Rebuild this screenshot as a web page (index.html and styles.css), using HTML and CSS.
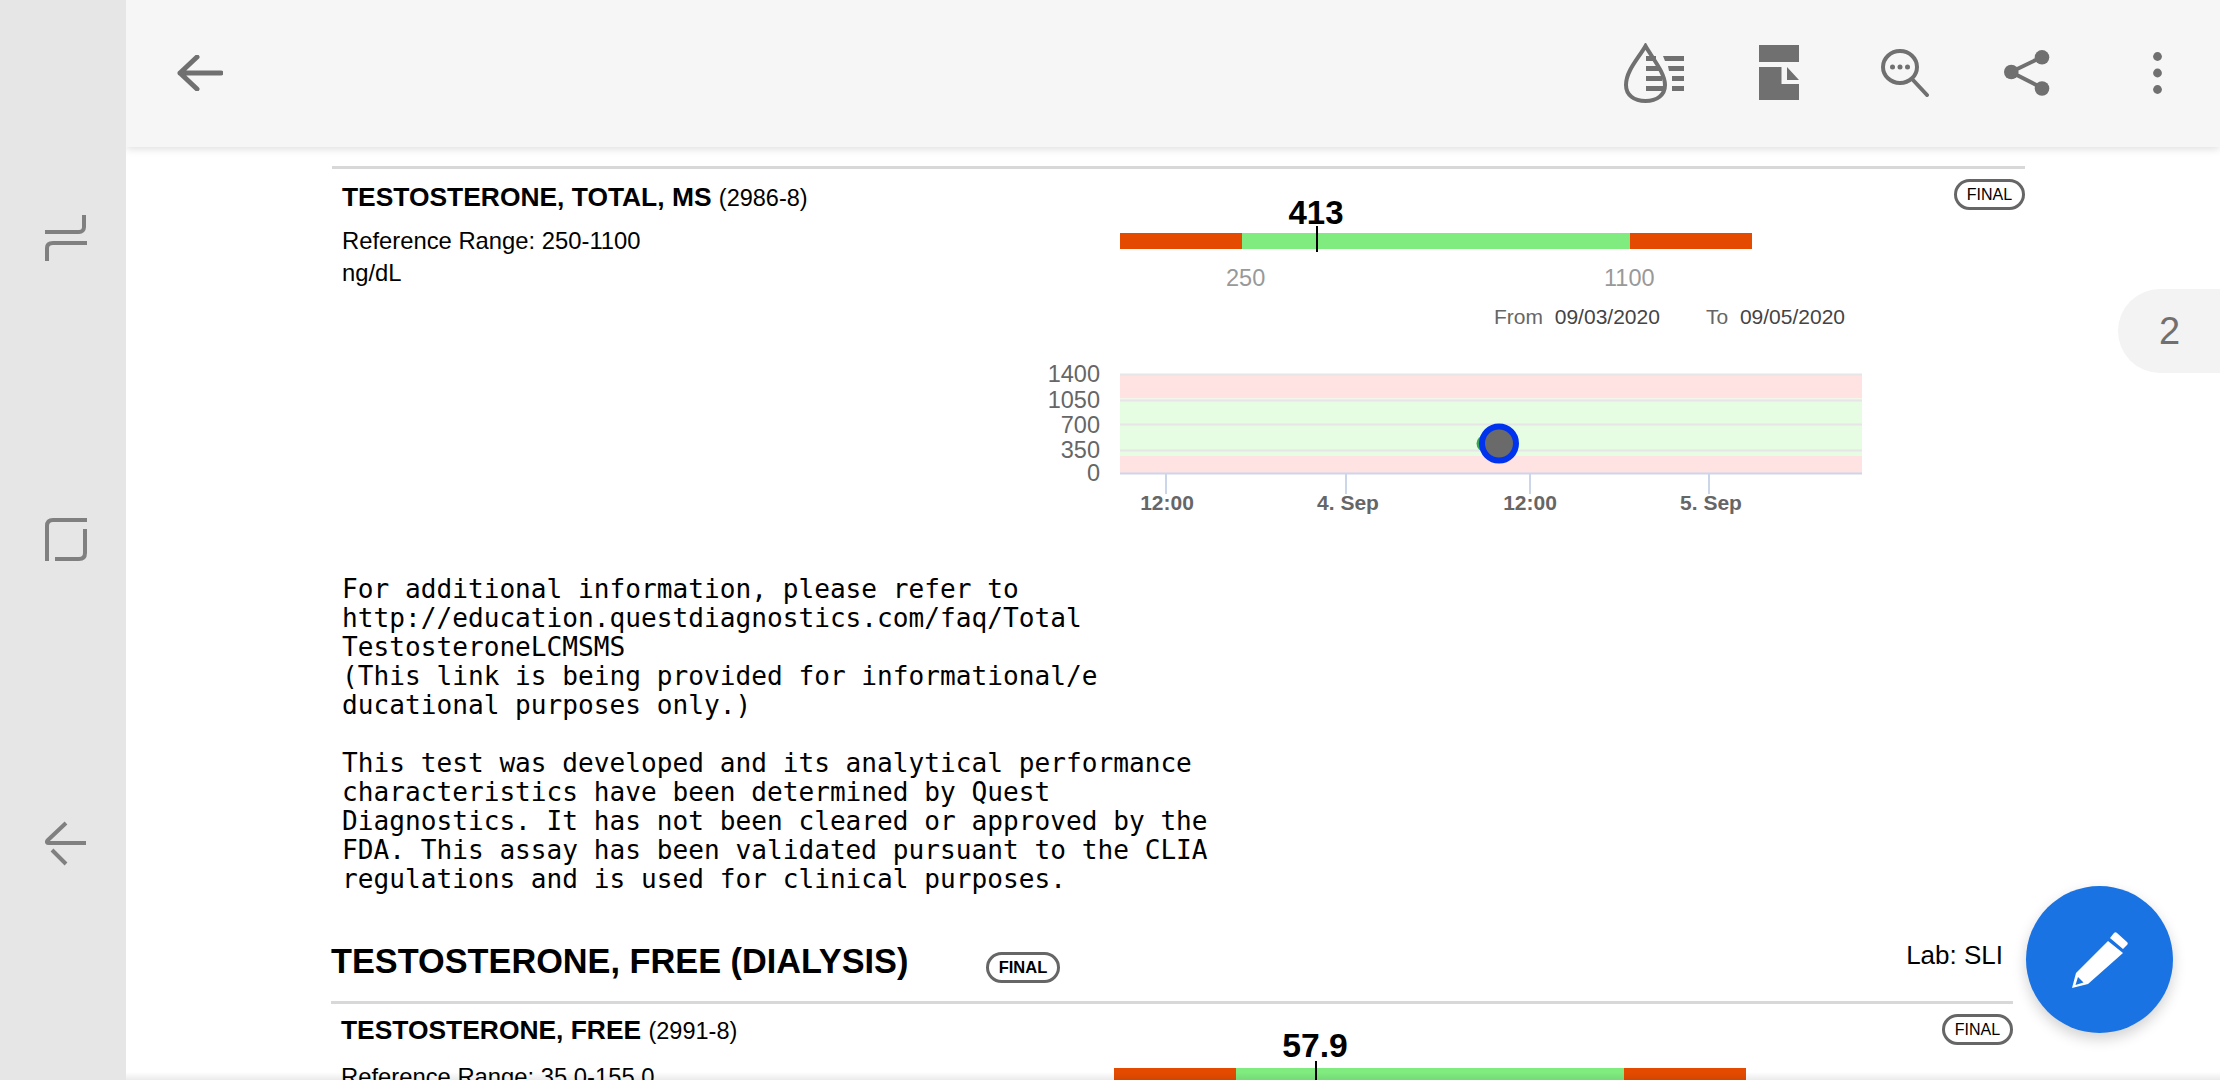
FILE: index.html
```html
<!DOCTYPE html>
<html lang="en">
<head>
<meta charset="utf-8">
<title>Lab results</title>
<link rel="stylesheet" href="styles.css">
</head>
<body>
<div class="app">
  <nav class="softkeys">
    <svg class="softkey" width="42" height="46" viewBox="0 0 42 46"><path d="M39 0V12c0 3-2 5-5 5H0M42 28H8c-4 0-6 2-6 5V46"/></svg>
    <svg class="softkey" width="42" height="46" viewBox="0 0 42 46"><path d="M2 43V8c0-4 2-6 6-6H42M40 11V35c0 4-2 6-6 6H10"/></svg>
    <svg class="softkey" width="42" height="46" viewBox="0 0 42 46"><path d="M21 2L3 19c-2 2-1 3 1 3H41M7 29L21 43"/></svg>
  </nav>
  <div class="main">
    <header class="toolbar">
      <svg class="back" width="46" height="36" viewBox="0 0 46 36"><path d="M44 18H3M20 2L3 18l17 16"/></svg>
      <div class="actions">
        <span class="action"><svg width="61" height="60" viewBox="0 0 61 60"><path class="ol" d="M22.5 3C15 16 3 28 3 42c0 10 8 16 19.500 16S42 52 42 42C42 30 30 16 22.500 3z"/><path class="fl" d="M23 13h10v5H23zM23 23h14v5H23zM23 33h16v5H23zM23 43h17v5H23zM40 13h21v5H42zM45 23h16v5H46zM49 33h12v5H49zM49 43h12v5H49z"/></svg></span>
        <span class="action"><svg width="40" height="55" viewBox="0 0 40 55"><path class="fl" d="M0 0h40v17H0zM0 22h22.500v17H40v16H0zM28 22l12 13H28z"/></svg></span>
        <span class="action"><svg width="48" height="48" viewBox="0 0 48 48"><ellipse class="ol" cx="19" cy="18" rx="17" ry="16"/><path class="ol" d="M32 31l14 15"/><circle class="fl" cx="11.500" cy="18" r="2.500"/><circle class="fl" cx="19" cy="18" r="2.500"/><circle class="fl" cx="26.500" cy="18" r="2.500"/></svg></span>
        <span class="action share"><svg width="46" height="46" viewBox="0 0 46 46"><path class="ol" d="M38 7L7 22l31 16"/><circle class="fl" cx="38" cy="7.300" r="7.300"/><circle class="fl" cx="7.300" cy="22" r="7.300"/><circle class="fl" cx="38" cy="38.500" r="7.300"/></svg></span>
        <span class="action"><svg width="9" height="42" viewBox="0 0 9 42"><circle class="fl" cx="4.500" cy="4.500" r="4.400"/><circle class="fl" cx="4.500" cy="21" r="4.400"/><circle class="fl" cx="4.500" cy="37.500" r="4.400"/></svg></span>
      </div>
    </header>
    <main class="content">
      <section class="result first">
        <div class="result-head">
          <h3 class="result-name">TESTOSTERONE, TOTAL, MS <span class="code">(2986-8)</span></h3>
          <span class="pill">FINAL</span>
        </div>
        <div class="result-body">
          <div class="info">
            <p>Reference Range: 250-1100</p>
            <p>ng/dL</p>
          </div>
          <div class="graphs">
            <div class="range">
              <div class="range-value">413</div>
              <div class="range-bar">
                <i class="seg low"></i><i class="seg ok"></i><i class="seg high"></i>
                <i class="marker"></i>
              </div>
              <div class="range-labels"><span>250</span><span>1100</span></div>
            </div>
            <div class="dates">
              <span>From <b>09/03/2020</b></span>
              <span>To <b>09/05/2020</b></span>
            </div>
            <svg class="trend" width="780" height="150" viewBox="0 0 780 150">
              <rect class="band-red" x="58" y="4" width="742" height="23.500"/>
              <rect class="band-green" x="58" y="27.500" width="742" height="57"/>
              <rect class="band-red" x="58" y="84.500" width="742" height="17.500"/>
              <path class="grid" d="M58 3.500h742M58 29.500h742M58 53.500h742M58 79.500h742"/>
              <path class="axis" d="M58 102.500h742M104 103v20M284 103v20M468 103v20M647 103v20"/>
              <text class="ylab" x="38" y="11">1400</text>
              <text class="ylab" x="38" y="37">1050</text>
              <text class="ylab" x="38" y="62">700</text>
              <text class="ylab" x="38" y="87">350</text>
              <text class="ylab" x="38" y="110">0</text>
              <text class="xlab" x="105" y="139">12:00</text>
              <text class="xlab" x="286" y="139">4. Sep</text>
              <text class="xlab" x="468" y="139">12:00</text>
              <text class="xlab" x="649" y="139">5. Sep</text>
              <circle class="dot-prev" cx="422.500" cy="72.500" r="8"/>
              <circle class="dot" cx="437" cy="72.500" r="17"/>
            </svg>
          </div>
        </div>
        <pre class="note">For additional information, please refer to
http://education.questdiagnostics.com/faq/Total
TestosteroneLCMSMS
(This link is being provided for informational/e
ducational purposes only.)

This test was developed and its analytical performance
characteristics have been determined by Quest
Diagnostics. It has not been cleared or approved by the
FDA. This assay has been validated pursuant to the CLIA
regulations and is used for clinical purposes.</pre>
      </section>
      <section class="panel">
        <div class="panel-head">
          <h2 class="panel-title">TESTOSTERONE, FREE (DIALYSIS)</h2>
          <span class="pill bold">FINAL</span>
          <span class="lab">Lab: SLI</span>
        </div>
        <div class="result second">
          <div class="result-head">
            <h3 class="result-name">TESTOSTERONE, FREE <span class="code">(2991-8)</span></h3>
            <span class="pill">FINAL</span>
          </div>
          <div class="result-body">
            <div class="info"><p>Reference Range: 35.0-155.0</p></div>
            <div class="graphs">
              <div class="range">
                <div class="range-value">57.9</div>
                <div class="range-bar">
                  <i class="seg low"></i><i class="seg ok"></i><i class="seg high"></i>
                  <i class="marker"></i>
                </div>
              </div>
            </div>
          </div>
        </div>
      </section>
    </main>
    <div class="page-badge">2</div>
    <button class="fab" aria-label="Edit">
      <svg width="56" height="56" viewBox="0 0 56 56"><path class="pen" d="M42 1c1-1 2-1 3 0l10 9c1 1 1 2 0 3l-4 4-13-11zM36 9l15 12-35 31-12-11zM4 41l12 11-16 4z"/><path class="pen-core" d="M6 45l-2.500 8 8-2.500z"/></svg>
    </button>
    <div class="bottom-fade"></div>
  </div>
</div>
</body>
</html>
```

FILE: styles.css
```css
* { box-sizing: border-box; }
html, body { margin: 0; height: 100%; overflow: hidden; }
body { font-family: "Liberation Sans", Arial, sans-serif; color: #000; background: #fff; }
h2, h3, p, pre { margin: 0; }

.app { display: flex; width: 2220px; height: 1080px; }

.softkeys { width: 126px; flex: none; background: #e6e6e6; display: flex; flex-direction: column; align-items: center; padding-top: 215px; gap: 257px; }
.softkey { margin-left: 5px; fill: none; stroke: #808080; stroke-width: 4; }

.main { position: relative; flex: 1; display: flex; flex-direction: column; min-width: 0; overflow: hidden; }

.toolbar { height: 147px; flex: none; background: #f6f6f6; display: flex; align-items: center; justify-content: space-between; padding: 0 0 2px 51px; box-shadow: 0 2px 8px rgba(0,0,0,.13); position: relative; z-index: 2; }
.back { fill: none; stroke: #707070; stroke-width: 5; stroke-linecap: round; stroke-linejoin: round; }
.actions { display: flex; align-items: center; }
.action { width: 126px; display: flex; align-items: center; justify-content: center; }
.action.share { padding-right: 8px; }
.actions .ol { fill: none; stroke: #707070; stroke-width: 4; stroke-linecap: round; }
.actions .fl { fill: #707070; }

.content { flex: 1; min-height: 0; overflow: hidden; padding: 19px 0 0 206px; }

.first { width: 1693px; border-top: 3px solid #d8d8d8; padding: 0 0 0 10px; }
.result-head { display: flex; justify-content: space-between; align-items: flex-start; }
.first .result-head { padding-top: 12px; }
.first .pill { margin-top: -2px; }
.result-name { font-size: 26.4px; line-height: 32px; font-weight: 700; }
.code { font-weight: 400; font-size: 23.5px; }
.pill { display: inline-flex; align-items: center; justify-content: center; width: 71px; height: 31px; border: 3px solid #666; border-radius: 16px; font-size: 16px; color: #000; background: #fff; }
.pill.bold { font-weight: 700; font-size: 16.5px; width: 74px; }

.result-body { display: flex; }
.info { width: 768px; flex: none; font-size: 23.8px; line-height: 32px; padding-top: 11px; }
.info p { white-space: nowrap; }
.graphs { flex: 1; min-width: 0; margin-top: -17px; }
.range { width: 632px; margin-left: 10px; }
.range-value { font-size: 33px; font-weight: 700; line-height: 32px; text-align: center; width: 392px; }
.range-bar { position: relative; display: flex; height: 16px; margin-top: 4px; }
.seg { display: block; height: 100%; }
.seg.low { width: 122px; background: #e54b00; }
.seg.ok { width: 388px; background: #80ec80; }
.seg.high { width: 122px; background: #e54b00; }
.marker { position: absolute; left: 196px; top: -7px; width: 2px; height: 26px; background: #000; }
.range-labels { display: flex; font-size: 23.5px; color: #999; margin-top: 15.5px; line-height: 26px; }
.range-labels span:first-child { margin-left: 106px; width: 378px; }
.dates { display: flex; justify-content: flex-end; gap: 46px; width: 735px; font-size: 21px; line-height: 24px; color: #666; margin-top: 14.5px; }
.dates b { font-weight: 400; color: #444; margin-left: 6px; }
.trend { display: block; margin-top: 41.5px; margin-left: -48px; overflow: visible; }
.band-red { fill: #ffe3e3; }
.band-green { fill: #e6fde4; }
.grid { stroke: #e6e6e6; stroke-width: 2; fill: none; }
.axis { stroke: #ccd6eb; stroke-width: 2; fill: none; }
.ylab { font-family: "Liberation Sans", Arial, sans-serif; font-size: 23.5px; fill: #666; text-anchor: end; }
.xlab { font-family: "Liberation Sans", Arial, sans-serif; font-size: 21px; font-weight: 700; fill: #666; text-anchor: middle; }
.dot-prev { fill: #3aa655; }
.dot { fill: #6a6a6a; stroke: #0033ee; stroke-width: 6; }

.note { font-family: "DejaVu Sans Mono", "Liberation Mono", monospace; font-size: 26.15px; line-height: 29px; color: #000; margin-top: 54.5px; white-space: pre; }

.panel { width: 1682px; margin-top: 26px; margin-left: -1px; }
.panel-head { display: flex; align-items: center; height: 84px; border-bottom: 3px solid #d8d8d8; }
.panel-title { font-size: 34.3px; font-weight: 700; line-height: 40px; width: 655px; flex: none; }
.lab { margin-left: auto; font-size: 26px; margin-right: 10px; margin-bottom: 11px; }
.panel-head .pill { margin-top: 14px; }
.second { padding-left: 10px; }
.second .result-head { padding-top: 10px; }
.second .info { padding-top: 14px; }
.second .graphs { margin-top: -18px; }
.second .range { margin-left: 5px; }
.second .range-value { width: 402px; font-size: 33.7px; }
.second .range-bar { margin-top: 7px; }
.second .marker { left: 201px; }

.page-badge { position: absolute; right: 0; top: 289px; width: 102px; height: 84px; background: #f3f3f3; border-radius: 42px 0 0 42px; color: #707070; font-size: 38px; display: flex; align-items: center; padding-left: 41px; z-index: 3; }
.fab { position: absolute; left: 1900px; top: 886px; width: 147px; height: 147px; border: 0; border-radius: 50%; background: #1a73e2; box-shadow: 0 6px 14px rgba(0,0,0,.18); display: flex; align-items: center; justify-content: center; padding: 0; z-index: 4; }
.pen { fill: #fff; }
.pen-core { fill: #1a73e2; }
.bottom-fade { position: absolute; left: 0; right: 0; bottom: 0; height: 8px; background: linear-gradient(rgba(0,0,0,0), rgba(0,0,0,.08)); z-index: 3; }
```
